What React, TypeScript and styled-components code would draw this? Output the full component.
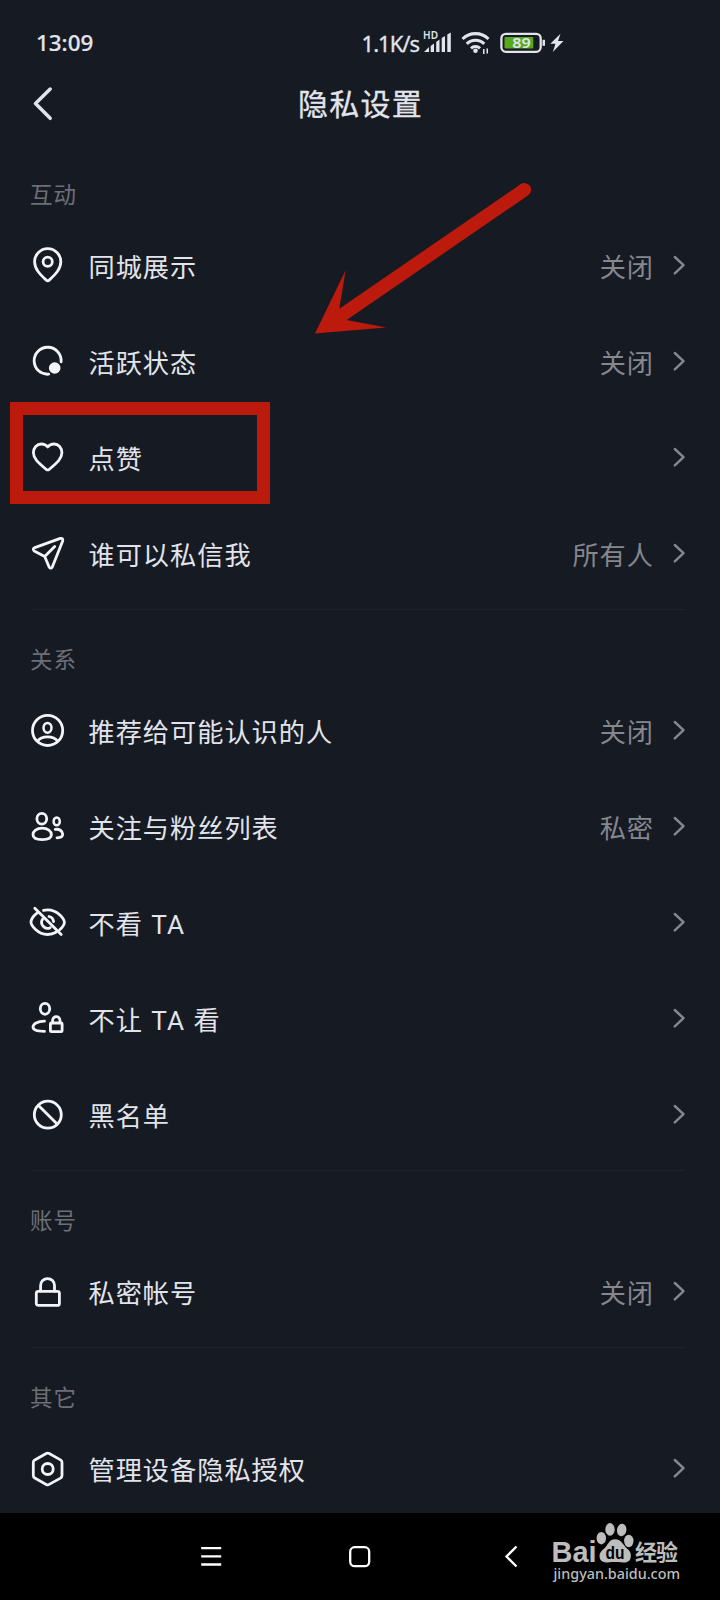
import React from "react";
import styled, { createGlobalStyle } from "styled-components";

const GlobalStyle = createGlobalStyle`
  * { box-sizing: border-box; }
  body {
    margin: 0;
    background: #161a22;
    font-family: "Noto Sans CJK SC", sans-serif;
  }
`;

const Screen = styled.div`
  position: relative;
  display: flex;
  flex-direction: column;
  width: 720px;
  height: 1600px;
  overflow: hidden;
  background: #161a22;
  color: #e2e4ec;
`;

const StatusBar = styled.header`
  display: flex;
  flex: none;
  align-items: center;
  height: 86px;
  padding: 0 152px 0 36px;
`;

const Clock = styled.span`
  margin-right: auto;
  font: 500 22.4px/30px "Noto Sans", sans-serif;
  -webkit-text-stroke: 0.2px currentColor;
`;

const NetworkSpeed = styled.span`
  font: 400 22px/29px "Noto Sans", sans-serif;
  letter-spacing: -1px;
  white-space: nowrap;
  -webkit-text-stroke: 0.3px currentColor;
`;

const StatusIcons = styled.svg`
  flex: none;
  width: 145px;
  height: 30px;
  margin-left: 4px;
`;

const TitleBar = styled.div`
  display: grid;
  flex: none;
  grid-template-columns: 64px 1fr 64px;
  align-items: center;
  height: 36px;
`;

const BackButton = styled.button`
  display: flex;
  padding: 0 0 0 32px;
  border: 0;
  background: none;
  color: inherit;
`;

const Title = styled.h1`
  margin: 0;
  padding: 0 0 3px 1px;
  font-size: 30px;
  font-weight: 400;
  line-height: 33px;
  letter-spacing: 1.2px;
  text-align: center;
  -webkit-text-stroke: 0.3px currentColor;
`;

const Content = styled.main`
  flex: 1;
  min-height: 0;
  padding-top: 23px;
  overflow: hidden;
`;

const Section = styled.section`
  padding-bottom: 8px;
`;

const SectionLabel = styled.h2<{ $divided: boolean }>`
  display: flex;
  align-items: flex-end;
  height: ${(p) => (p.$divided ? 73 : 72)}px;
  margin: 0 36px 0 32px;
  padding-bottom: 8px;
  border-top: ${(p) => (p.$divided ? "1px solid #1e232c" : "0")};
  color: #6c6f78;
  font-size: 22.5px;
  font-weight: 400;
  line-height: 32px;
  letter-spacing: 1px;
  text-indent: -2px;
`;

const Row = styled.div`
  display: flex;
  align-items: center;
  height: 96px;
  padding: 0 34px 0 28px;
`;

const RowIcon = styled.svg`
  flex: none;
  width: 40px;
  height: 40px;
  fill: none;
  stroke: #f3f4fa;
  stroke-width: 2.8;
  stroke-linecap: round;
  stroke-linejoin: round;
`;

const RowLabel = styled.span`
  flex: 1;
  margin-left: 20.5px;
  padding-top: 5px;
  font-family: Roboto, "Noto Sans CJK SC", sans-serif;
  font-size: 26.2px;
  line-height: 40px;
  letter-spacing: 1px;
  word-spacing: 1px;
`;

const RowValue = styled.span`
  margin-right: 18px;
  padding-top: 1px;
  color: #85868e;
  font-size: 26.2px;
  line-height: 40px;
  letter-spacing: 1px;
`;

const NavBar = styled.nav`
  display: flex;
  flex: none;
  align-items: center;
  height: 87px;
  padding-left: 200px;
  background: #000;
`;

const NavIcon = styled.svg<{ $gap?: number }>`
  flex: none;
  width: 24px;
  height: 24px;
  margin-right: ${(p) => p.$gap ?? 0}px;
  fill: none;
  stroke: #fff;
  stroke-width: 2.3;
`;

const Watermark = styled.svg`
  flex: none;
  align-self: flex-start;
  width: 145px;
  height: 75px;
  margin-top: 2px;
`;

const Highlight = styled.div`
  position: absolute;
  top: 402px;
  left: 10px;
  width: 260px;
  height: 102px;
  border: 13px solid #bb1a0c;
`;

const Arrow = styled.svg`
  position: absolute;
  top: 180px;
  left: 310px;
  width: 225px;
  height: 160px;
  fill: #bb1a0c;
`;

const icons = {
  pin: (
    <>
      <path d="M18.2 35.1C12 29.4 6.6 24 6.6 16.7a13.1 13.1 0 0 1 26.2 0c0 7.3-5.4 12.7-11.6 18.4q-1.5 1.2-3 0z" />
      <circle cx="19.7" cy="16.7" r="4.6" />
    </>
  ),
  active: (
    <>
      <path d="M33.1 20.8A13.5 13.5 0 1 0 20.7 33.2" />
      <circle cx="26.7" cy="27" r="5.8" fill="#f3f4fa" stroke="none" />
    </>
  ),
  heart: (
    <path d="M19.7 10C21.3 8 23.6 7 26 7c4.500 0 7.900 3.700 7.900 8.800 0 5.700-4.500 9.600-12.600 16.500q-1.600 1.200-3.200 0C10 25.400 5.400 21.500 5.400 15.800 5.400 10.700 8.900 7 13.400 7c2.400 0 4.700 1 6.300 3z" />
  ),
  plane: (
    <path d="M32.3 5.4L6.8 14.6q-2.8 1.4-.6 3.3l10.5 5.6 4.4 10.4q1.6 2.5 3.2 0L34.7 8q.6-3.2-2.4-2.6zM16.7 23.5l10-10" />
  ),
  person: (
    <>
      <circle cx="19.6" cy="20.4" r="15.1" />
      <ellipse cx="19.5" cy="17.8" rx="4" ry="4.900" strokeWidth="2.500" />
      <path d="M9.6 31.2Q12.4 26.900 19.5 26.900T29.600 31.200" />
    </>
  ),
  people: (
    <>
      <ellipse cx="13.8" cy="12.7" rx="4.9" ry="5.4" />
      <path d="M14.2 22.200c5.600 0 9.200 3 9.200 6.600s-3.400 4.800-9.200 4.800S5 32.400 5 28.800s3.600-6.600 9.200-6.600z" />
      <ellipse cx="28.7" cy="15.4" rx="3.100" ry="3.9" strokeWidth="2.500" />
      <path d="M27.200 23.300c4.600-.4 7.500 1.900 7.500 5 0 2.600-2 3.500-5.700 3.500" />
    </>
  ),
  eyeOff: (
    <>
      <path d="M9 11.200C5 14.300 3 18.200 3 20.300c0 2.300 6 12.200 16.600 12.200 3.200 0 6-.9 8.400-2.300M15.400 8.400c1.400-.4 2.700-.6 4.200-.6 10.500 0 16.800 9.600 16.800 12.500 0 1.700-1.700 4.800-4.700 7.500" />
      <path d="M14.500 17.200a6 6 0 0 0 7.700 8.500M21 14.500a6 6 0 0 1 4.600 5M6.800 6.200l26.400 26.400" />
    </>
  ),
  personLock: (
    <>
      <ellipse cx="17" cy="10.8" rx="4.7" ry="5.500" />
      <path d="M16.500 23.200C9.300 23.200 5 25.800 5 29.100c0 3 3.800 4.300 11.500 4.300" />
      <rect x="22.4" y="25" width="11.7" height="8.700" rx="1" />
      <path d="M24.600 24.800v-2.400a3.700 3.700 0 0 1 7.400 0v2.400" />
    </>
  ),
  block: (
    <>
      <circle cx="19.8" cy="20.7" r="13.5" />
      <path d="M10.500 11.400l18.600 18.600" />
    </>
  ),
  lock: (
    <>
      <rect x="8.300" y="20.300" width="23.100" height="14.100" rx="2" />
      <path d="M12.600 20v-5.500a6.950 6.950 0 0 1 13.900 0V20" />
    </>
  ),
  device: (
    <>
      <path d="M18.200 5.600q1.500-.8 3 0l11.300 6.300q1.500.9 1.500 2.600v13q0 1.700-1.500 2.600l-11.300 6.300q-1.500.8-3 0L6.800 30.100q-1.500-.9-1.500-2.600v-13q0-1.700 1.500-2.600z" />
      <circle cx="19.7" cy="21" r="5.500" />
    </>
  ),
};

type Item = { icon: keyof typeof icons; label: string; value?: string };

const sections: { label: string; items: Item[] }[] = [
  {
    label: "互动",
    items: [
      { icon: "pin", label: "同城展示", value: "关闭" },
      { icon: "active", label: "活跃状态", value: "关闭" },
      { icon: "heart", label: "点赞" },
      { icon: "plane", label: "谁可以私信我", value: "所有人" },
    ],
  },
  {
    label: "关系",
    items: [
      { icon: "person", label: "推荐给可能认识的人", value: "关闭" },
      { icon: "people", label: "关注与粉丝列表", value: "私密" },
      { icon: "eyeOff", label: "不看 TA" },
      { icon: "personLock", label: "不让 TA 看" },
      { icon: "block", label: "黑名单" },
    ],
  },
  { label: "账号", items: [{ icon: "lock", label: "私密帐号", value: "关闭" }] },
  { label: "其它", items: [{ icon: "device", label: "管理设备隐私授权" }] },
];

const Chevron = () => (
  <svg width="14" height="22" viewBox="0 0 14 22" fill="none" stroke="#85868e" strokeWidth="2.5" strokeLinecap="round" strokeLinejoin="round">
    <path d="M2.8 3l8.700 8.200-8.700 8.200" />
  </svg>
);

export default function App() {
  return (
    <>
      <GlobalStyle />
      <Screen>
        <StatusBar>
          <Clock>13:09</Clock>
          <NetworkSpeed>1.1K/s</NetworkSpeed>
          <StatusIcons viewBox="0 0 145 30" fill="#e2e4ec">
            <text x="0" y="10.8" fontFamily="Noto Sans" fontSize="10" fontWeight="600" textLength="15">HD</text>
            <path d="M1 24l5-5v5zM7.700 24v-6l3.300-2.500V24zM13.200 24V14l3.300-2.500V24zM18.700 24v-14l3.300-2v16zM24.300 24V6.500l3.500-2V24z" />
            <g fill="none" stroke="#e2e4ec" strokeWidth="3.1">
              <path d="M39.500 11a18.500 18.500 0 0 1 26 0M43.800 15.800a12.300 12.300 0 0 1 17.400 0M48 20.300a6.500 6.500 0 0 1 9 0" />
            </g>
            <circle cx="52.500" cy="22.700" r="2.300" />
            <path d="M60 21h1.500v5H60zM63.500 20.500H65v5h-1.500z" />
            <rect x="78.400" y="5.800" width="39.300" height="18" rx="4.500" fill="none" stroke="#e2e4ec" strokeWidth="2.300" />
            <rect x="81.500" y="9" width="28.800" height="11.500" rx="1" fill="#58a81e" />
            <path d="M119.500 11.800h2.500v6h-2.500z" />
            <text x="89.200" y="20" fontFamily="Noto Sans" fontSize="14.500" fontWeight="600" textLength="18.500" lengthAdjust="spacingAndGlyphs">89</text>
            <path d="M137.500 5.800l-10.200 10h5.200l-2.700 8.200 10.700-11h-5.500z" />
          </StatusIcons>
        </StatusBar>
        <TitleBar>
          <BackButton aria-label="返回">
            <svg width="22" height="36" viewBox="0 0 22 36" fill="none" stroke="#e2e4ec" strokeWidth="3.500" strokeLinecap="round" strokeLinejoin="round">
              <path d="M18.200 3L3.500 17.500l14.700 14.800" />
            </svg>
          </BackButton>
          <Title>隐私设置</Title>
        </TitleBar>
        <Content>
          {sections.map((section, i) => (
            <Section key={section.label}>
              <SectionLabel $divided={i > 0}>{section.label}</SectionLabel>
              {section.items.map((item) => (
                <Row key={item.label}>
                  <RowIcon viewBox="0 0 40 40">{icons[item.icon]}</RowIcon>
                  <RowLabel>{item.label}</RowLabel>
                  {item.value && <RowValue>{item.value}</RowValue>}
                  <Chevron />
                </Row>
              ))}
            </Section>
          ))}
        </Content>
        <NavBar>
          <NavIcon $gap={124} viewBox="0 0 24 24"><path d="M1.200 3.200h20M1.200 11.400h20M1.200 19.500h20" /></NavIcon>
          <NavIcon $gap={131} viewBox="0 0 24 24"><rect x="2.200" y="2.200" width="19" height="19" rx="4.500" /></NavIcon>
          <NavIcon $gap={18} viewBox="0 0 24 24"><path d="M13.500 1.500L3.500 11.500l10 10" /></NavIcon>
          <Watermark viewBox="0 0 145 75" fill="#bdbdbd">
            <text x="6.500" y="47" fontFamily="Liberation Sans" fontSize="29.500" fontWeight="700" textLength="45" lengthAdjust="spacingAndGlyphs">Bai</text>
            <ellipse cx="56.300" cy="23.200" rx="4.700" ry="6.200" />
            <ellipse cx="65" cy="14.400" rx="4.700" ry="6.300" />
            <ellipse cx="76.700" cy="15" rx="4.700" ry="6.300" transform="rotate(8 76.700 15)" />
            <ellipse cx="83.800" cy="26" rx="4.700" ry="6.200" />
            <path d="M70 24.300c7 0 8.300 6.500 12.300 9.500 3.500 3 3.900 5.700 3.400 8.700-.7 4-4 5.300-8 4.900-5-.6-10-.6-15 0-4.500.5-8-1.500-8.200-5.800-.2-3.500 2-5.900 5-8.300 3.500-3 4.300-9 10.500-9z" />
            <text x="60.500" y="44" fill="#000" fontFamily="Liberation Sans" fontSize="18" fontWeight="700" textLength="19" lengthAdjust="spacingAndGlyphs">du</text>
            <text x="90" y="45.200" fontFamily="Noto Sans CJK SC" fontSize="22" fontWeight="700" textLength="43">经验</text>
            <text x="8.500" y="64" fontFamily="Noto Sans" fontSize="15" fontWeight="500" textLength="126.500" lengthAdjust="spacingAndGlyphs">jingyan.baidu.com</text>
          </Watermark>
        </NavBar>
        <Highlight />
        <Arrow viewBox="310 180 225 160">
          <path d="M315 333.500L345.700 270l-6.400 38.700L520.800 184.100a6.700 6.700 0 0 1 7.500 11.100L346.700 320l39.600 7.500z" />
        </Arrow>
      </Screen>
    </>
  );
}
